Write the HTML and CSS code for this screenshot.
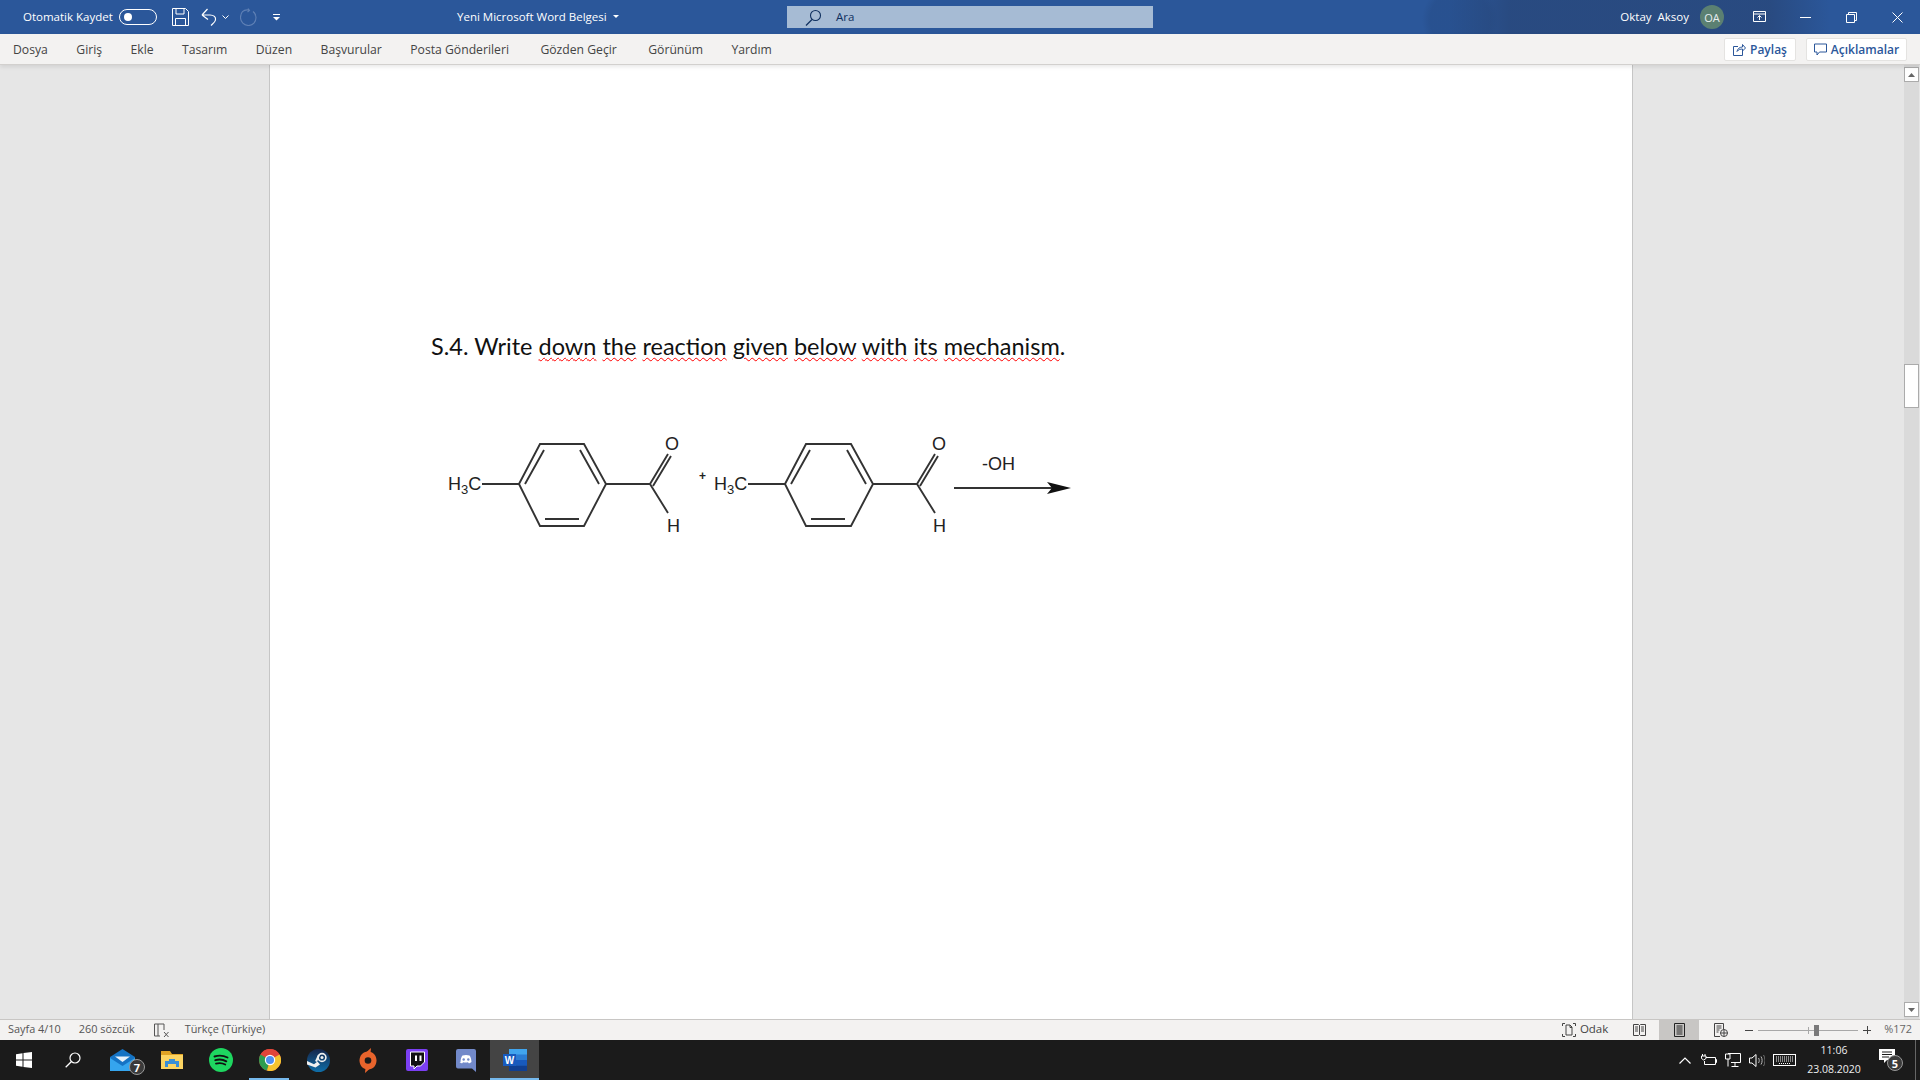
FILE: index.html
```html
<!DOCTYPE html>
<html lang="tr">
<head>
<meta charset="utf-8">
<title>Yeni Microsoft Word Belgesi</title>
<link rel="stylesheet" href="styles.css">
</head>
<body>
<div class="app">
  <header class="titlebar">
    <span class="autosave">Otomatik Kaydet</span>
    <span class="toggle"><span class="knob"></span></span>
    <svg class="qa save" viewBox="0 0 17 18" width="17" height="18"><path d="M.5.5h13l3 3v14H.5zM4 .5v5.500h8V.5M3.500 17.500v-7h10v7" fill="none" stroke="#fff"/></svg>
    <svg class="qa undo" viewBox="0 0 16 18" width="16" height="18"><path d="M1 7l5.500-6M1 7l6 4.500M1.500 7H9c4 0 6 2 5.500 5-.4 2-2.500 3.500-4.500 5.500" fill="none" stroke="#fff" stroke-width="1.200"/></svg>
    <svg class="qa chev" viewBox="0 0 7 5" width="7" height="5"><path d="M.5.5L3.500 3.500 6.500.5" fill="none" stroke="#fff"/></svg>
    <svg class="qa redo" viewBox="0 0 17 18" width="17" height="18"><path d="M9 2C3 1 .5 5 .5 9.500s3.500 8 8 8 7.500-3.500 7.500-8c0-2.500-1-4.500-3-6M8 .5l1.500 2L7.500 4" fill="none" stroke="#5f80b5" stroke-width="1.100"/></svg>
    <svg class="qa custom" viewBox="0 0 7 7" width="7" height="7"><path d="M0 .5h7" stroke="#fff"/><path d="M0 3h7L3.500 6.500z" fill="#fff"/></svg>
    <span class="doc-title">Yeni Microsoft Word Belgesi</span>
    <svg class="doc-caret" viewBox="0 0 6 4" width="6" height="4"><path d="M0 0h6L3 3z" fill="#fff"/></svg>
    <div class="search">
      <svg class="search-icon" viewBox="0 0 17 17" width="17" height="17"><circle cx="10.500" cy="6.500" r="5" fill="none" stroke="#10305f" stroke-width="1.100"/><path d="M7 10.500L1 16.500" stroke="#10305f" stroke-width="1.200"/></svg>
      <span class="search-text">Ara</span>
    </div>
    <div class="title-right">
      <span class="user">Oktay&nbsp; Aksoy</span>
      <span class="avatar">OA</span>
      <svg class="win-ctl ribbon-disp" viewBox="0 0 19 12" width="19" height="12"><path d="M3.500.500h12v10h-12zM3.500 3h12" fill="none" stroke="#fff"/><path d="M9.500 9V4.500M7.500 6.500l2-2 2 2" fill="none" stroke="#fff"/></svg>
      <svg class="win-ctl win-min" viewBox="0 0 11 1" width="11" height="1"><path d="M0 .5h11" stroke="#fff"/></svg>
      <svg class="win-ctl win-max" viewBox="0 0 11 11" width="11" height="11"><path d="M.5 2.500h8v8h-8zM2.500 2.500V.5h8v8h-2" fill="none" stroke="#fff"/></svg>
      <svg class="win-ctl win-close" viewBox="0 0 11 11" width="11" height="11"><path d="M.5.500l10 10M10.500.500l-10 10" stroke="#fff"/></svg>
    </div>
  </header>

  <nav class="ribbon">
    <span class="tab">Dosya</span>
    <span class="tab">Giriş</span>
    <span class="tab">Ekle</span>
    <span class="tab">Tasarım</span>
    <span class="tab">Düzen</span>
    <span class="tab">Başvurular</span>
    <span class="tab">Posta Gönderileri</span>
    <span class="tab tab-review">Gözden Geçir</span>
    <span class="tab tab-view">Görünüm</span>
    <span class="tab">Yardım</span>
    <div class="ribbon-actions">
      <button class="rbtn share">
        <svg viewBox="0 0 13 13" width="13" height="13"><path d="M5 3.500H.5v9h9V8M4 8.500C4.500 5.500 7 4 9.500 4V1.500l3 3.500-3 3V6C7.500 6 5.500 6.500 4 8.500z" fill="none" stroke="#2b579a"/></svg>
        Paylaş
      </button>
      <button class="rbtn comments">
        <svg viewBox="0 0 13 13" width="13" height="13"><path d="M.5 1h12v8H5.500L3 12V9H.5z" fill="none" stroke="#2b579a"/></svg>
        Açıklamalar
      </button>
    </div>
  </nav>

  <main class="workspace">
    <div class="gutter gutter-left"></div>
    <article class="page">
      <p class="question">S.4. Write <span class="sq">down</span> <span class="sq">the</span> <span class="sq">reaction</span> <span class="sq">given</span> <span class="sq">below</span> <span class="sq">with</span> <span class="sq">its</span> <span class="sq">mechanism</span>.</p>
      <svg class="reaction" viewBox="0 0 640 110" width="640" height="110">
        <g fill="none" stroke="#333" stroke-width="1.900">
          <path d="M51 44H88L109 4H153L175 44L153 86H109L88 44M175 44H219M219 44L237 14M222 46L240 16M219 44L237 73"/>
          <path d="M94 44L113 10M149 10L168 44M114 79H148"/>
          <path d="M317 44H354L375 4H420L442 44L420 86H375L354 44M442 44H486M486 44L504 14M489 46L507 16M486 44L504 73"/>
          <path d="M360 44L379 10M416 10L435 44M380 79H414"/>
          <path d="M523 48H625" stroke-width="2"/>
        </g>
        <path d="M616 42L640 48L616 54L621 48z" fill="#111"/>
        <g class="chem">
          <text x="17" y="50">H<tspan class="sub" dy="4">3</tspan><tspan dy="-4">C</tspan></text>
          <text x="234" y="10">O</text>
          <text x="236" y="92">H</text>
          <text x="283" y="50">H<tspan class="sub" dy="4">3</tspan><tspan dy="-4">C</tspan></text>
          <text x="501" y="10">O</text>
          <text x="502" y="92">H</text>
          <text x="551" y="30">-OH</text>
          <text class="plus" x="268" y="40">+</text>
        </g>
      </svg>
    </article>
    <div class="gutter gutter-right"></div>
    <aside class="scrollbar">
      <span class="sb-btn"><svg viewBox="0 0 7 4" width="7" height="4"><path d="M0 4L3.500 0 7 4z" fill="#666"/></svg></span>
      <span class="sb-track"><span class="sb-thumb"></span></span>
      <span class="sb-btn"><svg viewBox="0 0 7 4" width="7" height="4"><path d="M0 0L3.500 4 7 0z" fill="#666"/></svg></span>
    </aside>
  </main>

  <footer class="statusbar">
    <span class="st st-page">Sayfa 4/10</span>
    <span class="st st-words">260 sözcük</span>
    <svg class="st-proof" viewBox="0 0 15 15" width="15" height="15"><path d="M10 1H.5v12H6M10 1v6M10 9l4.500 5M14.500 9L10 14M4 1v12" fill="none" stroke="#555"/></svg>
    <span class="st st-lang">Türkçe (Türkiye)</span>
    <div class="st-right">
      <svg class="focus-icon" viewBox="0 0 14 14" width="14" height="14"><path d="M.5 3V.5H3M11 .5h2.500V3M.5 11v2.500H3M11 13.500h2.500V11M4 12V2h4l2 2v8zM8 2v2.500h2" fill="none" stroke="#444"/></svg>
      <span class="st st-focus">Odak</span>
      <svg class="view-icon view-read" viewBox="0 0 13 12" width="13" height="12"><path d="M.5.500h5l1 1 1-1h5v11h-5l-1-1-1 1h-5zM6.500 1.500v9M2 3h3M2 5h3M2 7h3M8 3h3M8 5h3M8 7h3" fill="none" stroke="#444"/></svg>
      <span class="view-active"><svg viewBox="0 0 11 14" width="11" height="14"><path d="M.5.500h10v13H.5zM2.500 3h6M2.500 5h6M2.500 7h6M2.500 9h6M2.500 11h6" fill="none" stroke="#222"/></svg></span>
      <svg class="view-icon view-web" viewBox="0 0 14 14" width="14" height="14"><path d="M6 13.500H.5V.5h9v6M2.500 3h5M2.500 5h5M2.500 7h3M2.500 9h2" fill="none" stroke="#444"/><circle cx="10" cy="10" r="3.500" fill="none" stroke="#444"/><path d="M6.500 10h7M10 6.500v7" stroke="#444"/></svg>
      <span class="zoom-minus"></span>
      <span class="slider"><span class="slider-tick"></span><span class="slider-thumb"></span></span>
      <span class="zoom-plus"></span>
      <span class="st st-zoom">%172</span>
    </div>
  </footer>

  <div class="taskbar">
    <span class="tb-cell tb-win"><svg viewBox="0 0 16 16" width="16" height="16"><path d="M0 2.200L6.500 1.300V7.500H0zM7.500 1.100L16 0V7.500H7.500zM0 8.500H6.500V14.700L0 13.800zM7.500 8.500H16V16L7.500 14.900z" fill="#fff"/></svg></span>
    <span class="tb-cell tb-search"><svg viewBox="0 0 16 16" width="16" height="16"><circle cx="10" cy="6" r="5" fill="none" stroke="#fff" stroke-width="1.200"/><path d="M6.500 9.500L.7 15.300" stroke="#fff" stroke-width="1.300"/></svg></span>

    <span class="tb-cell tb-app">
      <svg viewBox="0 0 25 22" width="25" height="22"><path d="M0 8L12.500 0 25 8v14H0z" fill="#1573c4"/><path d="M0 9l12.500 8L25 9v13H0z" fill="#35a5ee"/><path d="M5 7.500H20L12.500 13z" fill="#e8f2fb"/></svg>
      <span class="tb-badge badge-mail">7</span>
    </span>
    <span class="tb-cell tb-app">
      <svg viewBox="0 0 22 18" width="22" height="18"><path d="M0 0h9l2 3h11v15H0z" fill="#e0a325"/><path d="M0 4h22v14H0z" fill="#fcd462"/><path d="M4 16V10h4V8h6v2h4v6h-3v-3H7v3z" fill="#3a8fd6"/></svg>
    </span>
    <span class="tb-cell tb-app">
      <svg viewBox="0 0 24 24" width="24" height="24"><circle cx="12" cy="12" r="12" fill="#1ed760"/><path d="M5.500 8.500c4-1.200 9-1 13 1M6.300 12.200c3.500-1 7.800-.7 11 1.100M7 15.600c3-.8 6.500-.6 9.200.9" fill="none" stroke="#111" stroke-width="1.900" stroke-linecap="round"/></svg>
    </span>
    <span class="tb-cell tb-app tb-running">
      <svg viewBox="0 0 22 22" width="22" height="22"><circle cx="11" cy="11" r="11" fill="#e0453a"/><path d="M11 11L1.500 5.500A11 11 0 0 0 8 21.600z" fill="#2e9d50"/><path d="M11 11L8 21.600A11 11 0 0 0 20.500 5.500z" fill="#f4c430"/><path d="M1.500 5.500A11 11 0 0 1 20.500 5.500H11z" fill="#e0453a"/><circle cx="11" cy="11" r="5.200" fill="#fff"/><circle cx="11" cy="11" r="4" fill="#4f8ff0"/></svg>
    </span>
    <span class="tb-cell tb-app">
      <svg viewBox="0 0 23 23" width="23" height="23"><defs><linearGradient id="steamg" x1="0" y1="0" x2="0" y2="1"><stop offset="0" stop-color="#16254a"/><stop offset="1" stop-color="#0f6ea8"/></linearGradient></defs><circle cx="11.500" cy="11.500" r="11.500" fill="url(#steamg)"/><path d="M0 12l7 3.200 3.500-2.800 2.500 3-4.500 3L0 15.500z" fill="#f0f0f0"/><path d="M9 12.500L12 6" stroke="#f0f0f0" stroke-width="2"/><circle cx="15" cy="8.500" r="3.900" fill="none" stroke="#f0f0f0" stroke-width="1.600"/><circle cx="15" cy="8.500" r="1.500" fill="#f0f0f0"/></svg>
    </span>
    <span class="tb-cell tb-app">
      <svg viewBox="0 0 18 25" width="18" height="25"><path d="M9 3.500c5 0 8.500 4 8.500 9s-3.500 9-8.500 9-8.500-4-8.500-9 3.500-9 8.500-9z" fill="#e8642c"/><path d="M7 4.500L12 0l-.5 5zM11 20.500L6 25l.5-5z" fill="#e8642c"/><circle cx="9" cy="12.500" r="3.300" fill="#1b1b1b"/></svg>
    </span>
    <span class="tb-cell tb-app">
      <svg viewBox="0 0 22 22" width="22" height="22"><rect width="22" height="22" rx="2" fill="#7b3ff2"/><path d="M4.500 3h14v10l-4 4H11l-3 3v-3H4.500z" fill="#111" stroke="#fff"/><path d="M10 6.500v5.500M14.500 6.500v5.500" stroke="#fff" stroke-width="2"/></svg>
    </span>
    <span class="tb-cell tb-app">
      <svg viewBox="0 0 20 23" width="20" height="23"><path d="M2 0h16a2 2 0 0 1 2 2v21l-4-3.500H2a2 2 0 0 1-2-2V2a2 2 0 0 1 2-2z" fill="#7289c9"/><path d="M4.500 13c.2-3 1-5.500 2-6.500 2.200-.8 4.800-.8 7 0 1 1 1.800 3.500 2 6.500-1 1-2 1.300-2.800 1.300l-.7-1.100c-1.500.4-3.500.4-5 0l-.7 1.100c-.8 0-1.800-.3-2.800-1.300z" fill="#fff"/><circle cx="7.700" cy="10.500" r="1.200" fill="#7289c9"/><circle cx="12.300" cy="10.500" r="1.200" fill="#7289c9"/></svg>
    </span>
    <span class="tb-cell tb-app tb-active">
      <svg viewBox="0 0 24 22" width="24" height="22"><path d="M6 0h18v22H6z" fill="#2b7cd3"/><path d="M6 0h18v5.500H6z" fill="#41a5ee"/><path d="M6 11h18v5.500H6z" fill="#185abd"/><path d="M6 16.500h18V22H6z" fill="#103f91"/><rect y="5" width="13" height="12" fill="#185abd"/><text class="word-w" x="6.500" y="15">W</text></svg>
    </span>

    <div class="tray">
      <svg class="tray-ic tray-chev" viewBox="0 0 12 7" width="12" height="7"><path d="M.5 6.500l5.500-5.500 5.500 5.500" fill="none" stroke="#fff" stroke-width="1.200"/></svg>
      <svg class="tray-ic tray-power" viewBox="0 0 16 12" width="16" height="12"><path d="M5 3.500h9.500v7h-11V7M14.500 5.500h1v3h-1" fill="none" stroke="#fff"/><path d="M1.500 0v2M4 0v2M.5 2h4.500v2.500L2.700 6 .5 4.500z" fill="none" stroke="#fff"/></svg>
      <svg class="tray-ic tray-net" viewBox="0 0 16 14" width="16" height="14"><path d="M3 .5h12.500v9H6M10 9.500v3.500M6.500 13.500h7M.5 1h4.500v5H.5zM3 6v7.500" fill="none" stroke="#fff"/></svg>
      <svg class="tray-ic tray-vol" viewBox="0 0 16 13" width="16" height="13"><path d="M.5 4h2.500l4-3.500v12L3 9H.5z" fill="none" stroke="#fff"/><path d="M9.500 4c1 1.500 1 3.500 0 5M12 2.500c1.500 2.500 1.500 5.500 0 8" fill="none" stroke="#bbb"/><path d="M14.500 1c2 3.300 2 7.700 0 11" fill="none" stroke="#777"/></svg>
      <svg class="tray-ic tray-kbd" viewBox="0 0 23 12" width="23" height="12"><rect x=".5" y=".5" width="22" height="11" fill="none" stroke="#fff"/><path d="M3 3h17M3 5h17M3 7h17M6 9.500h11" stroke="#fff" stroke-dasharray="1 1"/></svg>
      <div class="clock"><span class="clock-time">11:06</span><span class="clock-date">23.08.2020</span></div>
      <span class="notif">
        <svg viewBox="0 0 16 16" width="16" height="16"><path d="M0 0h16v11H8l-3 3v-3H0z" fill="#fff"/><path d="M3 3h10M3 5.500h10M3 8h7" stroke="#1b1b1b"/></svg>
        <span class="tb-badge badge-notif">5</span>
      </span>
      <span class="show-desktop"></span>
    </div>
  </div>
</div>
</body>
</html>
```
FILE: styles.css
```css
* { box-sizing: border-box; }
html, body { margin: 0; height: 100%; overflow: hidden; }
body { font-family: "Open Sans", "Noto Sans", sans-serif; font-size: 11.500px; color: #444; }
.app { width: 1920px; height: 1080px; display: flex; flex-direction: column; }

/* title bar */
.titlebar {
  height: 34px; flex: none; display: flex; align-items: center; color: #fff;
  background-color: #2b579a;
  background-image:
    radial-gradient(circle at 1640px 20px, rgba(40,70,120,.75) 0, rgba(40,70,120,.75) 130px, rgba(40,70,120,0) 190px),
    radial-gradient(circle at 1460px 20px, rgba(35,70,125,.35) 0, rgba(35,70,125,.35) 30px, rgba(35,70,125,0) 38px);
}
.autosave, .doc-title, .search-text, .user { padding-bottom: 2px; }
.autosave { margin-left: 23px; width: 88px; white-space: nowrap; }
.toggle { margin-left: 8px; width: 38px; height: 16px; border: 1px solid #fff; border-radius: 8px; display: flex; align-items: center; padding-left: 4px; }
.knob { width: 8px; height: 8px; border-radius: 50%; background: #fff; }
.save { margin-left: 15px; }
.undo { margin-left: 12px; }
.chev { margin-left: 5px; }
.redo { margin-left: 11px; }
.custom { margin-left: 16px; }
.doc-title { margin-left: 177px; width: 149px; white-space: nowrap; }
.doc-caret { margin-left: 7px; }
.search { margin-left: 168px; width: 366px; height: 22px; background: #a6bbd4; color: #10305f; display: flex; align-items: center; padding-left: 18px; }
.search-text { margin-left: 14px; }
.title-right { margin-left: auto; display: flex; align-items: center; height: 100%; }
.user { white-space: nowrap; }
.avatar { margin-left: 11px; width: 24px; height: 24px; border-radius: 50%; background: #5b8072; display: flex; align-items: center; justify-content: center; font-size: 11px; color: #e8eef0; }
.ribbon-disp { margin-left: 26px; }
.win-min { margin-left: 31px; }
.win-max { margin-left: 35px; }
.win-close { margin-left: 35px; margin-right: 17px; }

/* ribbon */
.ribbon {
  height: 31px; flex: none; display: flex; align-items: center; background: #f3f2f1;
  border-bottom: 1px solid #d2d0ce; padding-left: 13px; gap: 28.400px; position: relative; z-index: 2;
  box-shadow: 0 2px 4px rgba(0,0,0,.09); font-size: 12.200px;
}
.tab-review { margin-left: 3px; }
.tab-view { margin-left: 3px; }
.ribbon-actions { margin-left: auto; display: flex; gap: 10px; padding-right: 13px; }
.rbtn {
  height: 23px; background: #fff; border: 1px solid #e4e3e1; border-radius: 2px; display: flex; align-items: center;
  justify-content: center; gap: 4px; color: #2b579a; font: 600 12px "Open Sans", sans-serif; padding: 0;
}
.share { width: 72px; }
.comments { width: 101px; }

/* workspace */
.workspace { flex: 1; min-height: 0; display: flex; background: #e6e6e6; }
.gutter-left { width: 269px; flex: none; }
.page { width: 1364px; flex: none; background: #fff; border-left: 1px solid #c6c6c6; border-right: 1px solid #c6c6c6; padding: 263px 0 0 161px; }
.gutter-right { flex: 1; }
.question { margin: 0; font: 400 23.500px/36px Lato, "Liberation Sans", sans-serif; color: #111; white-space: nowrap; }
.sq { text-decoration: underline wavy #f00 1px; text-underline-offset: 2px; }
.reaction { display: block; margin-top: 76px; overflow: visible; }
.chem text { font: 400 18px "Liberation Sans", Arial, sans-serif; fill: #222; }
.chem .sub { font-size: 13px; }
.chem .plus { font-size: 12px; font-weight: 700; }
.scrollbar { width: 16px; flex: none; display: flex; flex-direction: column; padding: 2px 1px 2px 0; background: linear-gradient(90deg, #dadada 15px, #e6e6e6 15px); }
.sb-btn { height: 15px; flex: none; background: #fff; border: 1px solid #ababab; display: flex; align-items: center; justify-content: center; }
.sb-track { flex: 1; padding-top: 282px; }
.sb-thumb { display: block; height: 44px; background: #fff; border: 1px solid #ababab; }

/* status bar */
.statusbar { height: 21px; flex: none; display: flex; align-items: center; background: #f3f2f1; border-top: 1px solid #c8c6c4; padding-left: 8px; font-size: 10.900px; color: #555; }
.st { white-space: nowrap; padding-bottom: 3px; }
.st-words { margin-left: 18px; }
.st-proof { margin-left: 19px; }
.st-lang { margin-left: 16px; }
.st-right { margin-left: auto; display: flex; align-items: center; height: 100%; }
.st-focus { margin-left: 4px; font-size: 11.500px; color: #444; }
.view-read { margin-left: 25px; }
.view-active { margin-left: 13px; width: 40px; height: 100%; background: #c8c6c4; display: flex; align-items: center; justify-content: center; }
.view-web { margin-left: 15px; }
.zoom-minus { margin-left: 17px; width: 8px; height: 1px; background: #444; }
.slider { margin-left: 5px; width: 100px; height: 1px; background: #a8a8a8; position: relative; }
.slider-tick { position: absolute; left: 50px; top: -3px; width: 1px; height: 7px; background: #a8a8a8; }
.slider-thumb { position: absolute; left: 56px; top: -5px; width: 5px; height: 11px; background: #7a7a7a; }
.zoom-plus { margin-left: 5px; width: 8px; height: 8px; background: linear-gradient(#444,#444) center/100% 1px no-repeat, linear-gradient(#444,#444) center/1px 100% no-repeat; }
.st-zoom { margin-left: 13px; margin-right: 8px; color: #666; }

/* taskbar */
.taskbar { height: 40px; flex: none; display: flex; align-items: stretch; background: #1b1b1b; color: #fff; }
.tb-cell { display: flex; align-items: center; justify-content: center; position: relative; flex: none; }
.tb-win { width: 48px; }
.tb-search { width: 49px; margin-right: 1px; }
.tb-app { width: 49px; }
.tb-running::after { content: ""; position: absolute; left: 4px; right: 5px; bottom: 0; height: 2px; background: #76b9ed; }
.tb-active { background: #444; }
.tb-active::after { content: ""; position: absolute; left: 0; right: 0; bottom: 0; height: 2px; background: #76b9ed; }
.word-w { font: 700 10px "Liberation Sans", sans-serif; fill: #fff; text-anchor: middle; }
.tb-badge { position: absolute; display: flex; align-items: center; justify-content: center; width: 16px; height: 16px; border-radius: 50%; background: #3a3a3a; border: 1px solid #999; color: #fff; font: 700 11px "Open Sans", sans-serif; }
.badge-mail { left: 31px; top: 19px; }
.badge-notif { left: 8px; top: 8px; }
.tray { margin-left: auto; display: flex; align-items: center; }
.tray-net { margin-left: 8px; }
.tray-power { margin-left: 10px; }
.tray-vol { margin-left: 8px; }
.tray-kbd { margin-left: 8px; }
.clock { margin-left: 11px; width: 54px; display: flex; flex-direction: column; align-items: center; font-size: 10.500px; line-height: 19px; color: #eee; white-space: nowrap; }
.notif { margin-left: 18px; position: relative; width: 20px; height: 26px; display: flex; padding-top: 2px; }
.show-desktop { margin-left: 16px; width: 1px; height: 100%; background: #666; align-self: stretch; margin-right: 4px; }
```
